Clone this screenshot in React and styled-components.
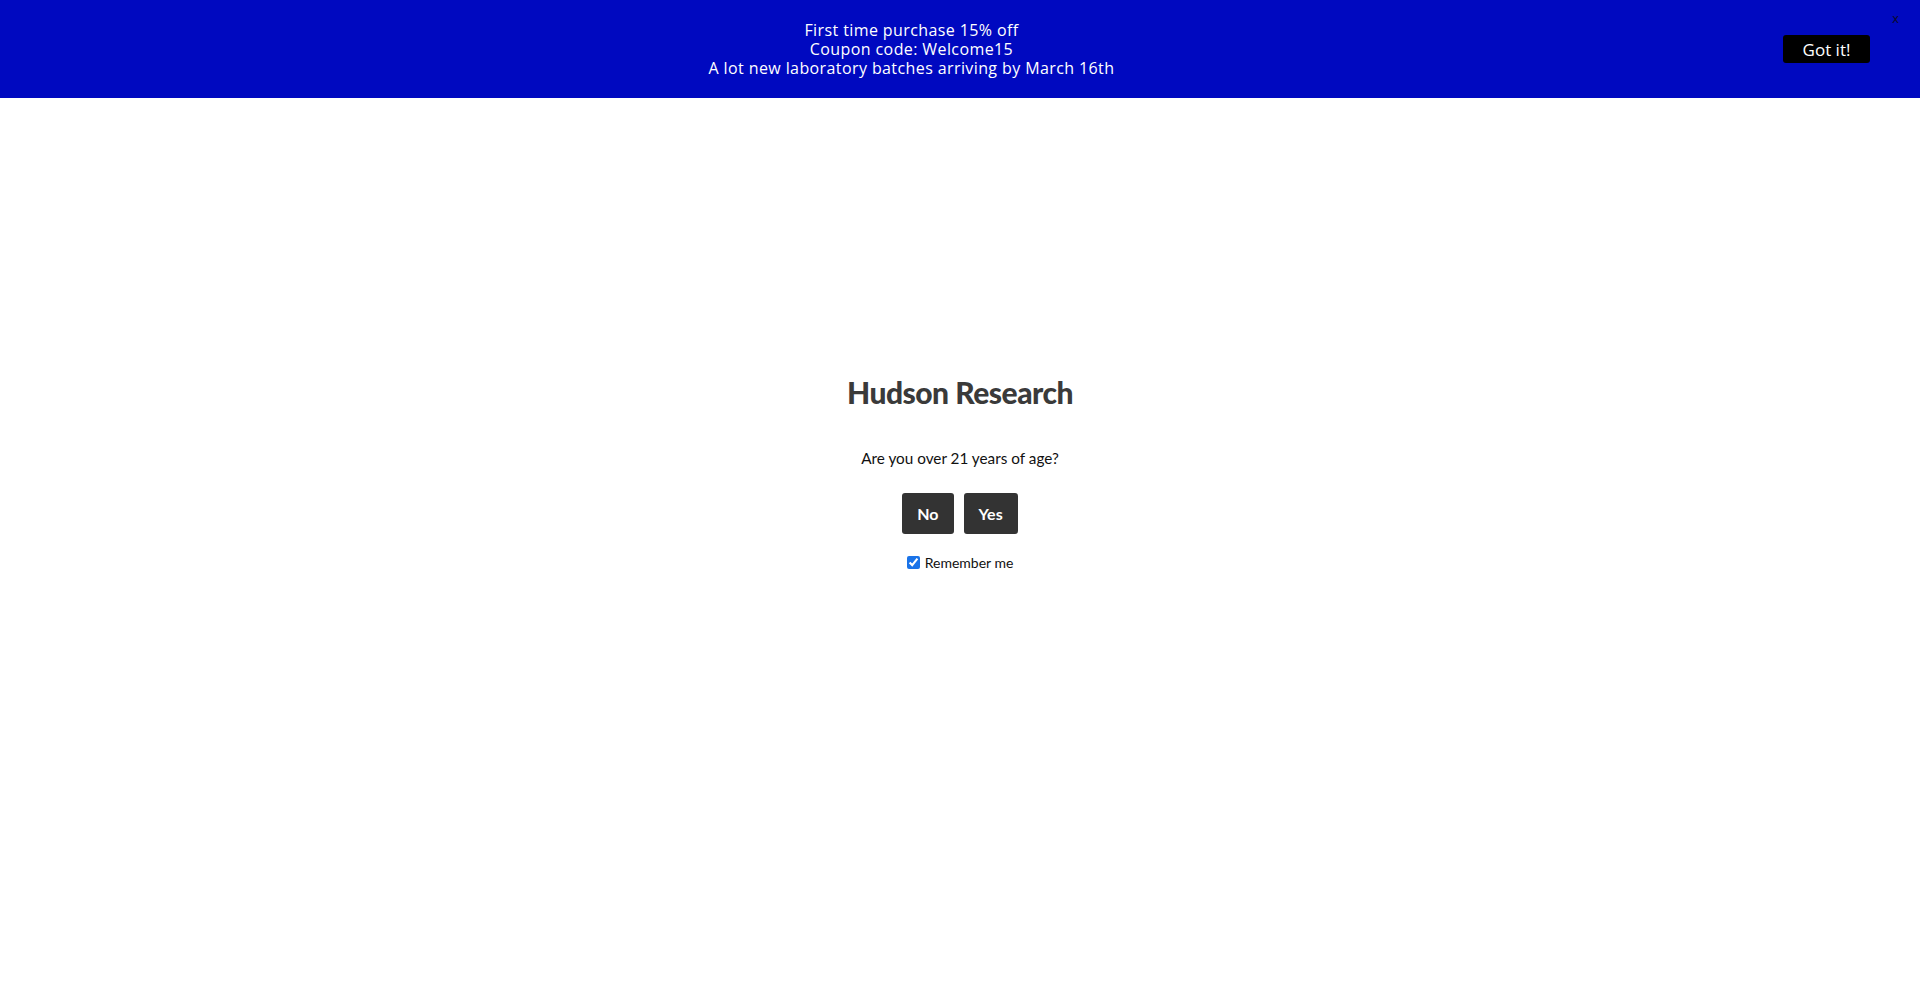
import React from "react";
import styled, { createGlobalStyle } from "styled-components";

const GlobalStyle = createGlobalStyle`
  html, body { margin: 0; padding: 0; background: #fff; }
  body { font-family: "Noto Sans", sans-serif; }
  * { box-sizing: border-box; }
`;

const Page = styled.div`
  min-height: 993px;
  display: flex;
  flex-direction: column;
`;

const Banner = styled.div`
  position: relative;
  height: 98px;
  background: #0009c0;
  display: flex;
  align-items: center;
`;

const Message = styled.div`
  flex: 1;
  padding-left: 40px;
  text-align: center;
  color: #fff;
  font-family: "Open Sans", sans-serif;
  font-size: 16px;
  line-height: 19px;
  letter-spacing: 0.4px;
`;

const GotIt = styled.button`
  width: 87px;
  height: 28px;
  margin-right: 50px;
  border: none;
  border-radius: 3px;
  background: #000;
  color: #fff;
  font-family: "Open Sans", sans-serif;
  font-size: 17px;
  padding: 0;
  cursor: pointer;
`;

const Close = styled.span`
  position: absolute;
  top: 12px;
  right: 21px;
  font-family: "DejaVu Sans", sans-serif;
  font-size: 12px;
  line-height: 14px;
  color: #0a0a30;
`;

const Gate = styled.main`
  display: flex;
  flex-direction: column;
  align-items: center;
  padding-top: 276px;
  color: #111;
`;

const Title = styled.h1`
  margin: 0;
  font-family: "Lato", sans-serif;
  font-weight: 900;
  font-size: 30px;
  line-height: 36px;
  color: #3a3a3a;
  letter-spacing: -0.5px;
`;

const Question = styled.p`
  margin: 38px 0 0;
  font-family: "Lato", sans-serif;
  font-size: 15.3px;
  line-height: 20px;
`;

const Buttons = styled.div`
  display: flex;
  gap: 10px;
  margin-top: 25px;
`;

const AgeButton = styled.button`
  height: 41px;
  padding: 0 ${(p) => p.$pad}px;
  border: none;
  border-radius: 3px;
  background: #333;
  color: #fff;
  font-family: "Lato", sans-serif;
  font-weight: 700;
  font-size: 16px;
  cursor: pointer;
`;

const Remember = styled.label`
  display: flex;
  align-items: center;
  gap: 5px;
  margin-top: 20px;
  font-family: "Lato", sans-serif;
  font-size: 14px;
  color: #111;
`;

const Check = styled.input`
  width: 13px;
  height: 13px;
  margin: 0;
  accent-color: #1a73e8;
`;

export default function App() {
  return (
    <Page>
      <GlobalStyle />
      <Banner>
        <Message>
          First time purchase 15% off
          <br />
          Coupon code: Welcome15
          <br />
          A lot new laboratory batches arriving by March 16th
        </Message>
        <GotIt>Got it!</GotIt>
        <Close>x</Close>
      </Banner>
      <Gate>
        <Title>Hudson Research</Title>
        <Question>Are you over 21 years of age?</Question>
        <Buttons>
          <AgeButton $pad={15}>No</AgeButton>
          <AgeButton $pad={15}>Yes</AgeButton>
        </Buttons>
        <Remember>
          <Check type="checkbox" defaultChecked />
          Remember me
        </Remember>
      </Gate>
    </Page>
  );
}
